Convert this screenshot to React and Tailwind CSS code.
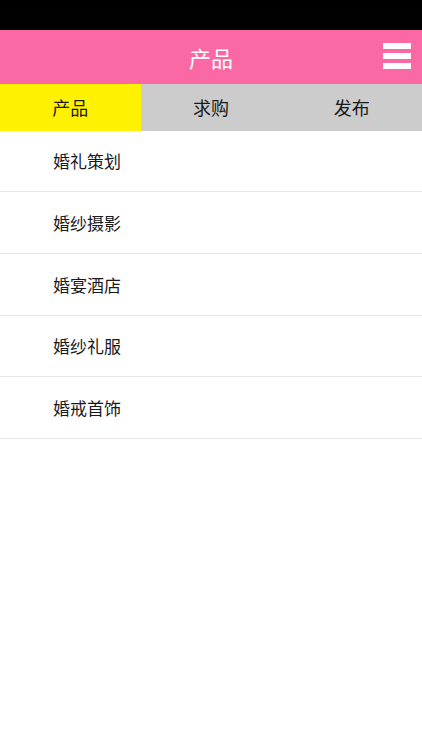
import React from "react";

const tabs = ["产品", "求购", "发布"];
const items = ["婚礼策划", "婚纱摄影", "婚宴酒店", "婚纱礼服", "婚戒首饰"];

export default function App() {
  return (
    <div className="min-h-[750px] bg-white font-['Noto_Sans_CJK_SC','Noto_Sans',sans-serif] text-[#1a1a1a]">
      {/* status bar */}
      <div className="h-[30px] bg-black" />

      {/* header */}
      <header className="relative flex h-[54px] items-center justify-center bg-[#fa69a3]">
        <h1 className="text-[22px] font-normal leading-none text-white">产品</h1>
        <button className="absolute right-[11px] top-[13px] flex w-[28px] flex-col gap-[4px]">
          <span className="h-[6px] w-full bg-white" />
          <span className="h-[6px] w-full bg-white" />
          <span className="h-[6px] w-full bg-white" />
        </button>
      </header>

      {/* tabs */}
      <nav className="grid h-[46.67px] grid-cols-3 bg-[#cccccc]">
        {tabs.map((t, i) => (
          <div
            key={t}
            className={`flex items-center justify-center text-[18px] leading-none ${i === 0 ? "bg-[#fff200]" : ""}`}
          >
            {t}
          </div>
        ))}
      </nav>

      {/* list */}
      <ul>
        {items.map((it) => (
          <li key={it} className="flex h-[61.67px] items-center border-b border-[#e6e6e6] pl-[53px] text-[17px] leading-none">
            {it}
          </li>
        ))}
      </ul>
    </div>
  );
}
